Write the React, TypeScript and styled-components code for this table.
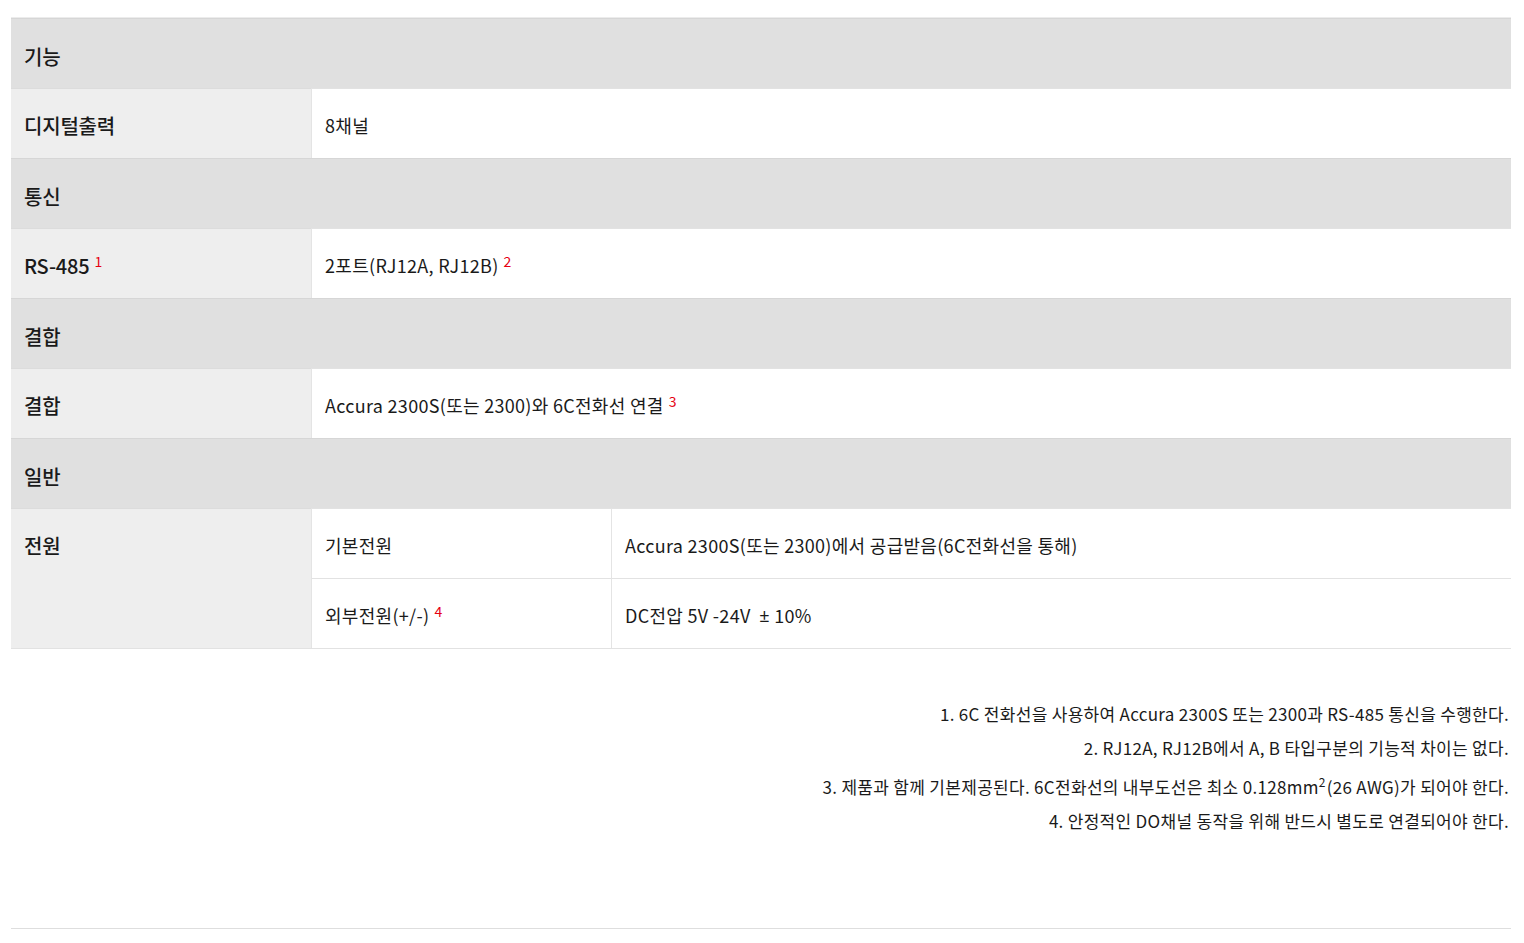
import { Fragment } from 'react';
import styled, { createGlobalStyle } from 'styled-components';

const GlobalStyle = createGlobalStyle`
  html, body {
    margin: 0;
    padding: 0;
    background: #ffffff;
  }
  body {
    font-family: 'Noto Sans CJK KR', 'Noto Sans', sans-serif;
    color: #1a1a1a;
  }
`;

type Row =
  | { kind: 'section'; title: string }
  | { kind: 'pair'; label: string; labelNote?: number; value: string; valueNote?: number };

const rows: Row[] = [
  { kind: 'section', title: '기능' },
  { kind: 'pair', label: '디지털출력', value: '8채널' },
  { kind: 'section', title: '통신' },
  { kind: 'pair', label: 'RS-485', labelNote: 1, value: '2포트(RJ12A, RJ12B)', valueNote: 2 },
  { kind: 'section', title: '결합' },
  { kind: 'pair', label: '결합', value: 'Accura 2300S(또는 2300)와 6C전화선 연결', valueNote: 3 },
  { kind: 'section', title: '일반' },
];

export default function App() {
  return (
    <Page>
      <GlobalStyle />
      <SpecTable>
        {rows.map((row, i) =>
          row.kind === 'section' ? (
            <SectionCell key={i}>{row.title}</SectionCell>
          ) : (
            <Fragment key={i}>
              <LabelCell>
                {row.label}
                {row.labelNote && <Note>{row.labelNote}</Note>}
              </LabelCell>
              <ValueCell $span={2}>
                {row.value}
                {row.valueNote && <Note>{row.valueNote}</Note>}
              </ValueCell>
            </Fragment>
          )
        )}
        <LabelCell $rows={2} $top>
          전원
        </LabelCell>
        <ValueCell>기본전원</ValueCell>
        <ValueCell>Accura 2300S(또는 2300)에서 공급받음(6C전화선을 통해)</ValueCell>
        <ValueCell>
          외부전원(+/-)<Note>4</Note>
        </ValueCell>
        <ValueCell>
          DC전압 5V -24V  <PlusMinus>±</PlusMinus> 10%
        </ValueCell>
      </SpecTable>

      <Notes>
        <NoteLine>1. 6C 전화선을 사용하여 Accura 2300S 또는 2300과 RS-485 통신을 수행한다.</NoteLine>
        <NoteLine>2. RJ12A, RJ12B에서 A, B 타입구분의 기능적 차이는 없다.</NoteLine>
        <NoteLine $tall>
          3. 제품과 함께 기본제공된다. 6C전화선의 내부도선은 최소 0.128mm<Sup2>2</Sup2>(26 AWG)가 되어야 한다.
        </NoteLine>
        <NoteLine>4. 안정적인 DO채널 동작을 위해 반드시 별도로 연결되어야 한다.</NoteLine>
      </Notes>

      <BottomRule />
    </Page>
  );
}

const Page = styled.div`
  width: 1500px;
  padding: 17px 0 0 11px;
`;

const SpecTable = styled.div`
  display: grid;
  grid-template-columns: 300px 300px 900px;
  grid-auto-rows: 70px;
  border-top: 1px solid #ececec;
  border-bottom: 1px solid #e2e2e2;
`;

const SectionCell = styled.div`
  grid-column: 1 / -1;
  display: flex;
  align-items: center;
  padding: 5px 13px 0;
  background: #e0e0e0;
  border-top: 1px solid #d6d6d6;
  font-size: 20px;
  font-weight: 500;
  letter-spacing: -0.2px;
`;

const LabelCell = styled.div<{ $rows?: number; $top?: boolean }>`
  grid-row: span ${(p) => p.$rows ?? 1};
  display: flex;
  align-items: ${(p) => (p.$top ? 'flex-start' : 'center')};
  padding: ${(p) => (p.$top ? '22px 13px 0' : '3px 13px 0')};
  background: #eeeeee;
  border-top: 1px solid #dcdcdc;
  font-size: 20px;
  font-weight: 500;
  letter-spacing: -0.2px;
`;

const ValueCell = styled.div<{ $span?: number }>`
  grid-column: span ${(p) => p.$span ?? 1};
  display: flex;
  align-items: center;
  padding: 2px 13px 0;
  background: #ffffff;
  border-left: 1px solid #e4e4e4;
  border-top: 1px solid #e2e2e2;
  font-size: 18px;
  font-weight: 400;
  letter-spacing: 0.3px;
  white-space: pre;
`;

const PlusMinus = styled.span`
  font-family: 'Noto Sans', sans-serif;
`;

const Note = styled.sup`
  color: #e60012;
  font-size: 14px;
  font-weight: 400;
  margin-left: 5px;
  position: relative;
  top: -4px;
  vertical-align: baseline;
  line-height: 0;
`;

const Sup2 = styled.sup`
  font-size: 12px;
  vertical-align: 7px;
  line-height: 0;
  margin-right: 1px;
`;

const Notes = styled.div`
  display: flex;
  flex-direction: column;
  align-items: flex-end;
  padding: 48px 2px 0 0;
`;

const NoteLine = styled.div<{ $tall?: boolean }>`
  font-size: 17px;
  line-height: 34px;
  padding-top: ${(p) => (p.$tall ? '5px' : '0')};
  letter-spacing: 0.3px;
  white-space: nowrap;
`;

const BottomRule = styled.div`
  margin-top: 90px;
  height: 1px;
  background: #dedede;
`;
